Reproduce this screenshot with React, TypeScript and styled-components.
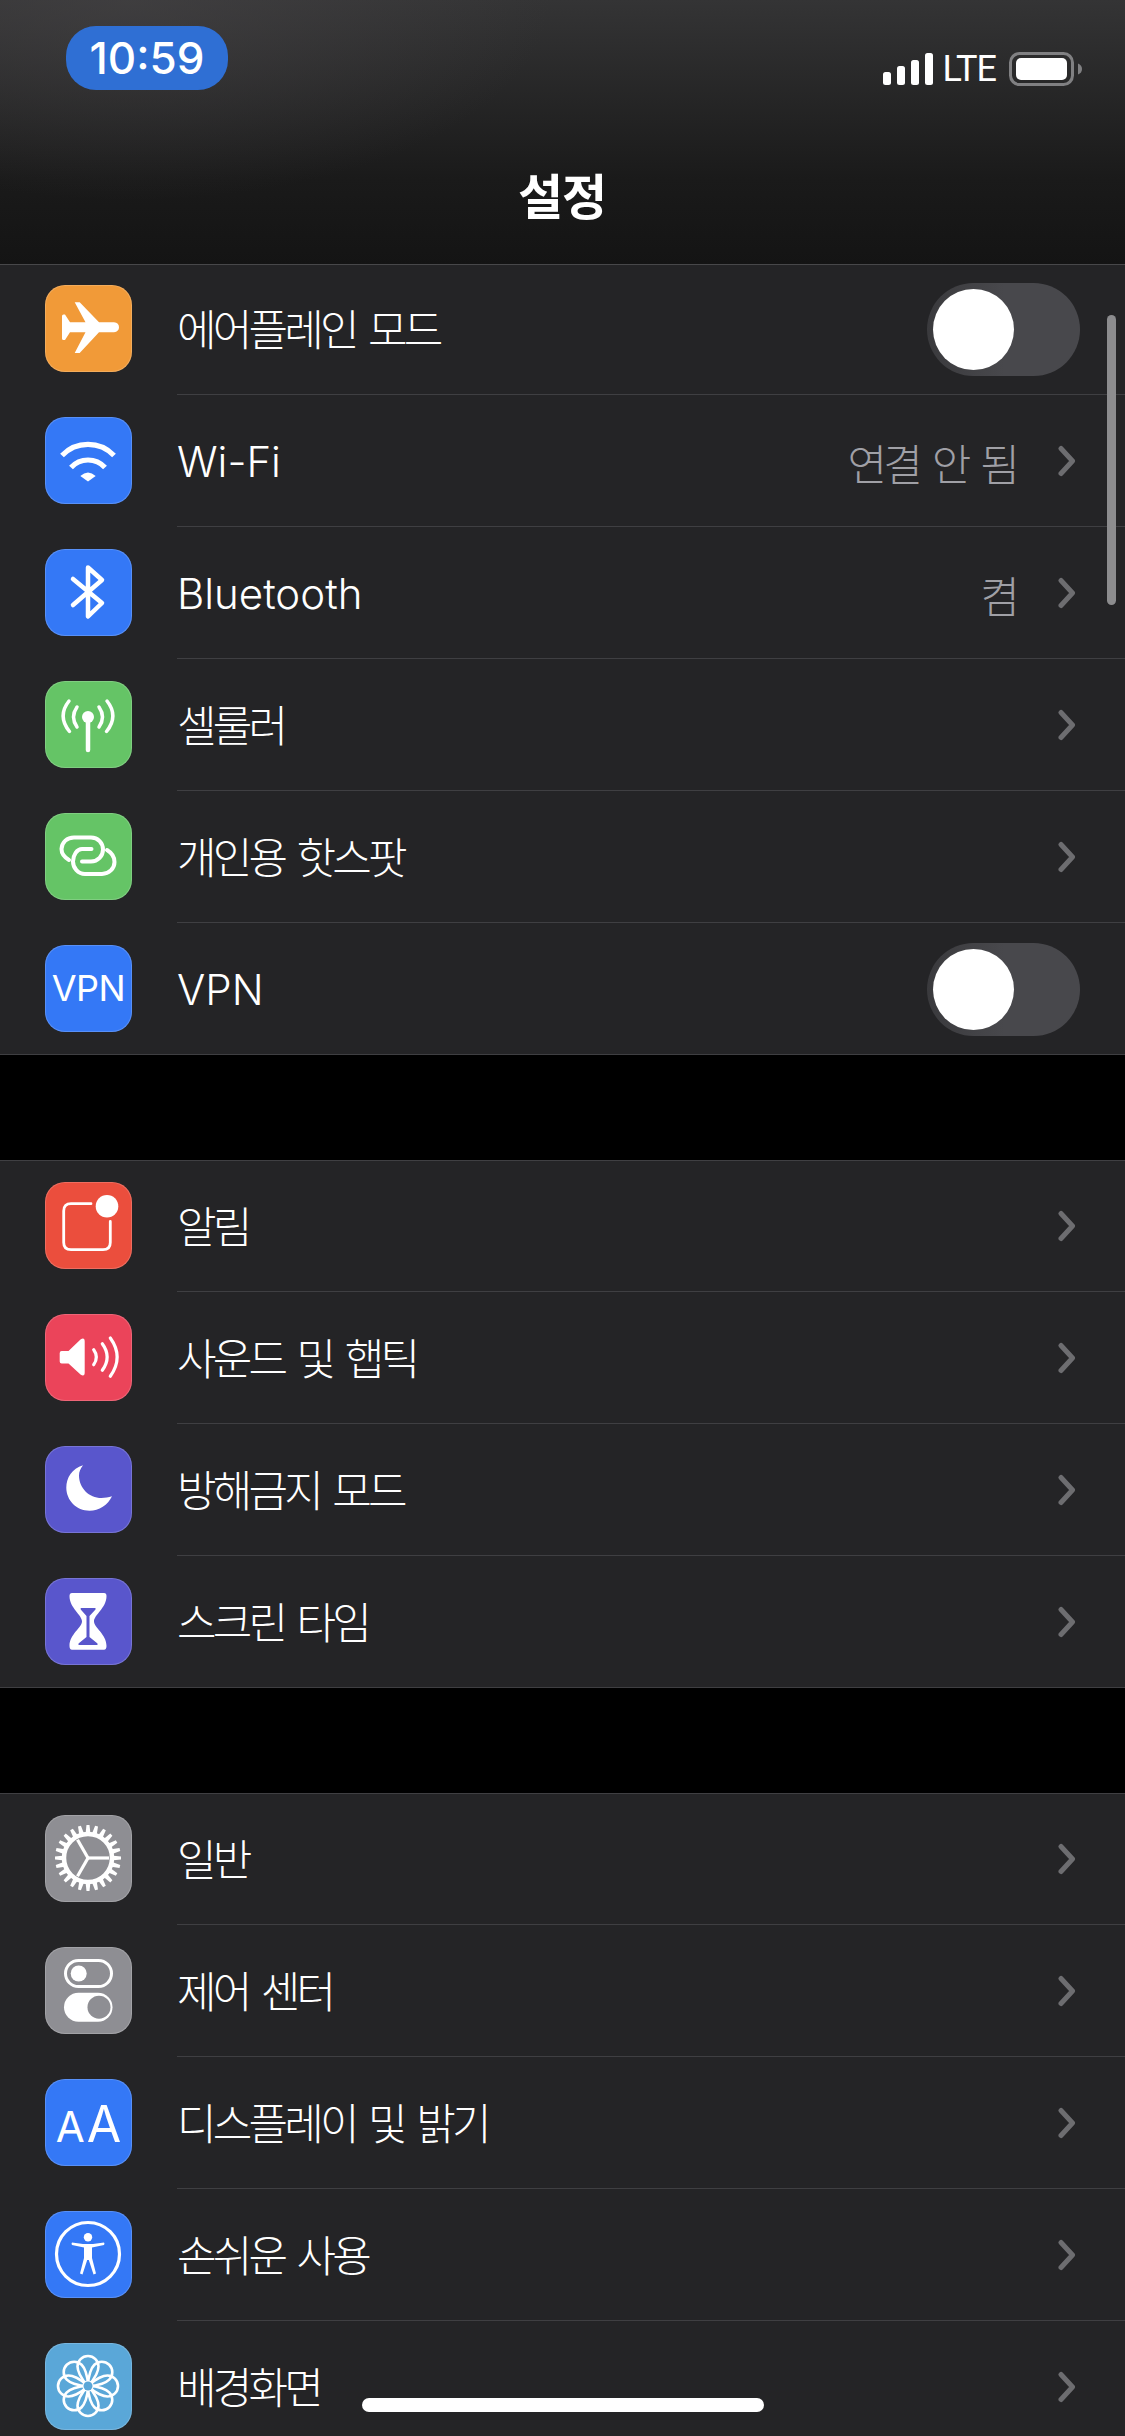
import React from 'react'
import styled, { createGlobalStyle } from 'styled-components'

const GlobalStyle = createGlobalStyle`
  html, body {
    margin: 0;
    padding: 0;
    background: #000;
  }
  body {
    font-family: "Inter", "Noto Sans CJK KR", sans-serif;
  }
`

const Screen = styled.div`
  width: 1125px;
  height: 2436px;
  position: relative;
  overflow: hidden;
  background: #000;
`

const Header = styled.header`
  position: relative;
  z-index: 1;
  height: 265px;
  box-sizing: border-box;
  padding: 26px 43px 0 66px;
  background:
    radial-gradient(ellipse 420px 200px at 130px 0, rgba(70, 68, 70, 0.6), rgba(70, 68, 70, 0) 100%),
    linear-gradient(180deg, #343435 0%, #1a1a1a 68%, #141414 100%);
  border-bottom: 1px solid #48484a;
`

const StatusBar = styled.div`
  display: flex;
  justify-content: space-between;
  align-items: flex-start;
`

const TimePill = styled.div`
  width: 162px;
  height: 64px;
  border-radius: 30px;
  background: #2f6fd4;
  color: #fff;
  font-size: 44px;
  font-weight: 500;
  line-height: 64px;
  text-align: center;
  font-family: "Inter", sans-serif;
`

const StatusRight = styled.div`
  display: flex;
  align-items: center;
  margin-top: 26px;
  height: 34px;
`

const Lte = styled.span`
  color: #fff;
  font-size: 36px;
  font-weight: 400;
  letter-spacing: -1px;
  font-family: "Roboto", sans-serif;
  line-height: 34px;
  margin: 0 13px 0 9px;
`

const Title = styled.h1`
  margin: 69px 24px 0 0;
  text-align: center;
  color: #fff;
  font-size: 49px;
  font-weight: 700;
  line-height: 70px;
  letter-spacing: -1px;
  font-family: "Noto Sans CJK KR", sans-serif;
`

const Group = styled.section`
  background: #242426;
  box-shadow: inset 0 1px 0 #3f3f42;
  margin-bottom: 105px;
`

const FirstGroup = styled(Group)`
  margin-top: -2px;
`

const Row = styled.div<{ $last: boolean }>`
  display: flex;
  align-items: center;
  height: 132px;
  box-sizing: border-box;
  padding-left: 45px;
  border-bottom: ${p => (p.$last ? '1px solid #3f3f42' : 'none')};
`

const IconTile = styled.div<{ $bg: string }>`
  flex: none;
  width: 87px;
  height: 87px;
  margin-bottom: 1px;
  border-radius: 20px;
  background: ${p => p.$bg};
  box-shadow: inset 0 0 0 1px rgba(255, 255, 255, 0.18);
  display: flex;
  align-items: center;
  justify-content: center;
  color: #fff;
  svg {
    display: block;
  }
`

const RowBody = styled.div<{ $last: boolean }>`
  flex: 1;
  align-self: stretch;
  margin-left: 45px;
  box-sizing: border-box;
  display: flex;
  align-items: center;
  padding-right: 45px;
  border-bottom: ${p => (p.$last ? 'none' : '1px solid #3f3f42')};
`

const Label = styled.span<{ $latin: boolean }>`
  flex: 1;
  color: #fff;
  margin-top: 2px;
  font-size: ${p => (p.$latin ? 42 : 43)}px;
  font-weight: 300;
  line-height: 60px;
  letter-spacing: ${p => (p.$latin ? 0 : -3.8)}px;
  word-spacing: ${p => (p.$latin ? 0 : 4)}px;
  font-family: "Inter", "Noto Sans CJK KR", sans-serif;
`

const Value = styled.span`
  color: #a0a0a6;
  font-size: 43px;
  font-weight: 300;
  line-height: 60px;
  letter-spacing: -3.8px;
  word-spacing: 7px;
  margin: 2px 40px 0 0;
  font-family: "Noto Sans CJK KR", sans-serif;
`

const Toggle = styled.div`
  width: 153px;
  height: 93px;
  margin-top: 2px;
  box-sizing: border-box;
  padding: 6px;
  border-radius: 47px;
  background: linear-gradient(90deg, #3a3a3d 0%, #48484c 50%);
`

const Knob = styled.div`
  width: 81px;
  height: 81px;
  border-radius: 50%;
  background: #fff;
`

const ChevronIcon = styled.svg`
  flex: none;
  width: 20px;
  height: 32px;
  margin-right: 4px;
`

const VpnText = styled.span`
  font-size: 36px;
  font-weight: 400;
  letter-spacing: -0.5px;
`

const TextIcon = styled.div`
  display: flex;
  align-items: baseline;
  gap: 2px;
  font-family: "Inter", sans-serif;
  font-weight: 400;
  line-height: 1;
  margin-top: 2px;
`

const SmallA = styled.span`
  font-size: 42px;
`

const BigA = styled.span`
  font-size: 50px;
`

const ScrollBar = styled.div`
  position: absolute;
  z-index: 2;
  left: 1107px;
  top: 315px;
  width: 9px;
  height: 290px;
  border-radius: 5px;
  background: #8c8c8e;
`

const HomeIndicator = styled.div`
  position: absolute;
  z-index: 2;
  left: 362px;
  top: 2398px;
  width: 402px;
  height: 14px;
  border-radius: 7px;
  background: #fff;
`

const Chevron = () => (
  <ChevronIcon viewBox="0 0 20 32">
    <path d="M5 3.5 L16.5 16 L5 28.5" fill="none" stroke="#6d6d70" strokeWidth="5" strokeLinecap="round" strokeLinejoin="round" />
  </ChevronIcon>
)

const Svg = ({ children }: { children: React.ReactNode }) => (
  <svg width="87" height="87" viewBox="0 0 87 87" fill="none">
    {children}
  </svg>
)

const Airplane = () => (
  <Svg>
    <path
      d="M17 31 Q17 29.5 18.5 29.5 L20 29.5 L25 37.3 L40.5 37.3 L29.7 17.3 L34.7 17.3 L54 37.3 L69 37.3 Q74 38 74 42.3 Q74 46.5 69 47.3 L54 47.3 L34.7 68 L29.7 68 L40.5 47.3 L25 47.3 L20 55 L18.5 55 Q17 55 17 53.5 Z"
      fill="#fff"
    />
  </Svg>
)

const Wifi = () => (
  <Svg>
    <path d="M17 38.5 A36 36 0 0 1 69 38.5" stroke="#fff" strokeWidth="5.2" />
    <path d="M26 50.5 A23 23 0 0 1 60 50.5" stroke="#fff" strokeWidth="5.2" />
    <path d="M35.3 59 Q43 52 50.7 59 L43 64.5 Z" fill="#fff" />
  </Svg>
)

const Bluetooth = () => (
  <Svg>
    <path d="M28 30 L57 54 L43 67.5 V18.5 L57 31 L28 56" stroke="#fff" strokeWidth="4.5" strokeLinecap="round" strokeLinejoin="round" />
  </Svg>
)

const Cellular = () => (
  <Svg>
    <circle cx="43" cy="36" r="6" fill="#fff" />
    <path d="M43 38 V69" stroke="#fff" strokeWidth="4.5" strokeLinecap="round" />
    <path d="M32 26 Q25 36 32 46" stroke="#fff" strokeWidth="3.5" strokeLinecap="round" />
    <path d="M54 26 Q61 36 54 46" stroke="#fff" strokeWidth="3.5" strokeLinecap="round" />
    <path d="M24 20 Q12 35 24.5 50.5" stroke="#fff" strokeWidth="3.5" strokeLinecap="round" />
    <path d="M62 20 Q74 35 61.5 50.5" stroke="#fff" strokeWidth="3.5" strokeLinecap="round" />
  </Svg>
)

const Hotspot = () => (
  <Svg>
    <path d="M24 47 C19 44 16.5 40 16.5 36 C17 29 22 24.5 29 24.5 H46 C53 24.5 58 30 58 36.5 C58 43 53 48.5 46 48.5 H37" stroke="#fff" strokeWidth="4" strokeLinecap="round" />
    <path d="M46.5 36 H37 C32 36 28 42 28 48.5 C28 55 33 61 40 61 H57 C64 61 69.5 55.5 69.5 49 C69.5 44 67 40 62 37" stroke="#fff" strokeWidth="4" strokeLinecap="round" />
  </Svg>
)

const Bell = () => (
  <Svg>
    <path d="M46 21.7 H26 Q18.7 21.7 18.7 29 V60.5 Q18.7 67.7 26 67.7 H58 Q65.3 67.7 65.3 60.5 V39.5" stroke="#fff" strokeWidth="2.8" strokeLinecap="round" />
    <circle cx="62" cy="24.3" r="11.3" fill="#fff" />
  </Svg>
)

const Sound = () => (
  <Svg>
    <path d="M14.7 39 Q14.7 37 16.7 37 L23.5 37 L35.5 25.5 Q39.7 23 39.7 27.5 V58.5 Q39.7 63 35.5 60.5 L23.5 49.5 L16.7 49.5 Q14.7 49.5 14.7 47.5 Z" fill="#fff" />
    <path d="M48.7 35.7 Q54 43 48.7 50.7" stroke="#fff" strokeWidth="3.2" strokeLinecap="round" />
    <path d="M57.3 29.7 Q67 43 57.3 56.3" stroke="#fff" strokeWidth="3.2" strokeLinecap="round" />
    <path d="M65.3 24 Q79 43 65.3 62.3" stroke="#fff" strokeWidth="3.2" strokeLinecap="round" />
  </Svg>
)

const Moon = () => (
  <Svg>
    <path d="M38 19.3 C27 22.5 21.3 32 21.3 41.5 C21.3 54.5 31.5 64.7 44.5 64.7 C54 64.7 63 59 67 50.3 C63.5 51.5 60 52 56.5 52 C44 52 34 42 34 29.5 C34 26 35.5 22.5 38 19.3 Z" fill="#fff" />
  </Svg>
)

const Hourglass = () => (
  <Svg>
    <path d="M27 15 H59 Q61.5 15 61.5 18 C61.5 30 49 37 49 43.3 C49 50 61.5 56 61.5 68 Q61.5 71.7 59 71.7 H27 Q24.5 71.7 24.5 68 C24.5 56 37 50 37 43.3 C37 37 24.5 30 24.5 18 Q24.5 15 27 15 Z" fill="#fff" />
    <path d="M35.7 30 H50.5 V31.5 L44.5 38 V59 L52.5 65.5 V67 H33.5 V65.5 L41.5 59 V38 L35.7 31.5 Z" fill="#5956cc" />
  </Svg>
)

const Gear = () => (
  <Svg>
    {Array.from({ length: 24 }, (_, i) => (
      <path key={i} d="M40.4 20 L41.5 10 H44.5 L45.6 20 Z" fill="#fff" transform={`rotate(${i * 15} 43 43)`} />
    ))}
    <circle cx="43" cy="43" r="24" stroke="#fff" strokeWidth="4.5" />
    {[90, 210, 330].map(a => (
      <path key={a} d="M43 43 V22" stroke="#fff" strokeWidth="3.2" transform={`rotate(${a} 43 43)`} />
    ))}
  </Svg>
)

const Switches = () => (
  <Svg>
    <rect x="20.5" y="13.5" width="46" height="26" rx="13" stroke="#fff" strokeWidth="3" />
    <circle cx="33.7" cy="26.5" r="8" fill="#fff" />
    <rect x="19" y="45.7" width="48.5" height="29" rx="14.5" fill="#fff" />
    <circle cx="54" cy="60.2" r="11.5" fill="#8e8e93" />
  </Svg>
)

const Accessibility = () => (
  <Svg>
    <circle cx="43" cy="43" r="31.5" stroke="#fff" strokeWidth="3.2" />
    <circle cx="43" cy="26.3" r="4.2" fill="#fff" />
    <path
      d="M27 31.5 L38 33 H48 L59 31.5 Q60 32.5 59 34 L47 36.5 V47 L51 62.5 L48.5 63.5 L43.8 49 H42.2 L37.5 63.5 L35 62.5 L39 47 V36.5 L27 34 Q26 32.5 27 31.5 Z"
      fill="#fff"
    />
  </Svg>
)

const Flower = () => (
  <Svg>
    {[0, 45, 90, 135, 180, 225, 270, 315].map(a => (
      <path
        key={a}
        d="M43 43 C35 35 32.5 27 32.5 23.5 A10.5 10.5 0 0 1 53.5 23.5 C53.5 27 51 35 43 43 Z"
        stroke="#fff"
        strokeWidth="2.6"
        transform={`rotate(${a} 43 43)`}
      />
    ))}
    <circle cx="43" cy="43" r="5.5" fill="#fff" />
    <circle cx="43" cy="43" r="4.5" fill="#5aa7d8" />
  </Svg>
)

type Item = {
  label: string
  bg: string
  icon: React.ReactNode
  value?: string
  toggle?: boolean
}

const groupOne: Item[] = [
  { label: '에어플레인 모드', bg: '#f19a38', icon: <Airplane />, toggle: true },
  { label: 'Wi-Fi', bg: '#3478f6', icon: <Wifi />, value: '연결 안 됨' },
  { label: 'Bluetooth', bg: '#3478f6', icon: <Bluetooth />, value: '켬' },
  { label: '셀룰러', bg: '#65c466', icon: <Cellular /> },
  { label: '개인용 핫스팟', bg: '#65c466', icon: <Hotspot /> },
  { label: 'VPN', bg: '#3478f6', icon: <VpnText>VPN</VpnText>, toggle: true },
]

const groupTwo: Item[] = [
  { label: '알림', bg: '#eb4e3d', icon: <Bell /> },
  { label: '사운드 및 햅틱', bg: '#eb445a', icon: <Sound /> },
  { label: '방해금지 모드', bg: '#5956cc', icon: <Moon /> },
  { label: '스크린 타임', bg: '#5956cc', icon: <Hourglass /> },
]

const groupThree: Item[] = [
  { label: '일반', bg: '#8e8e93', icon: <Gear /> },
  { label: '제어 센터', bg: '#8e8e93', icon: <Switches /> },
  {
    label: '디스플레이 및 밝기',
    bg: '#3478f6',
    icon: (
      <TextIcon>
        <SmallA>A</SmallA>
        <BigA>A</BigA>
      </TextIcon>
    ),
  },
  { label: '손쉬운 사용', bg: '#3478f6', icon: <Accessibility /> },
  { label: '배경화면', bg: '#5aa7d8', icon: <Flower /> },
]

const SettingsRow = ({ item, last }: { item: Item; last: boolean }) => (
  <Row $last={last}>
    <IconTile $bg={item.bg}>{item.icon}</IconTile>
    <RowBody $last={last}>
      <Label $latin={!/[가-힣]/.test(item.label)}>{item.label}</Label>
      {item.value && <Value>{item.value}</Value>}
      {item.toggle ? (
        <Toggle>
          <Knob />
        </Toggle>
      ) : (
        <Chevron />
      )}
    </RowBody>
  </Row>
)

const rows = (items: Item[]) =>
  items.map((item, i) => <SettingsRow key={item.label} item={item} last={i === items.length - 1} />)

export default function App() {
  return (
    <Screen>
      <GlobalStyle />
      <Header>
        <StatusBar>
          <TimePill>10:59</TimePill>
          <StatusRight>
            <svg width="51" height="32" viewBox="0 0 51 32">
              <rect x="0" y="19" width="8" height="13" rx="2.5" fill="#fff" />
              <rect x="14" y="13" width="8" height="19" rx="2.5" fill="#fff" />
              <rect x="28" y="7" width="8" height="25" rx="2.5" fill="#fff" />
              <rect x="42" y="0" width="8" height="32" rx="2.5" fill="#fff" />
            </svg>
            <Lte>LTE</Lte>
            <svg width="73" height="34" viewBox="0 0 73 34">
              <rect x="1.5" y="1.5" width="62" height="31" rx="9" fill="none" stroke="#808082" strokeWidth="3" />
              <rect x="7" y="6" width="51" height="22" rx="5" fill="#fff" />
              <path d="M69 11.5 Q73 13 73 17 Q73 21 69 22.5 Z" fill="#808082" />
            </svg>
          </StatusRight>
        </StatusBar>
        <Title>설정</Title>
      </Header>
      <FirstGroup>{rows(groupOne)}</FirstGroup>
      <Group>{rows(groupTwo)}</Group>
      <Group>{rows(groupThree)}</Group>
      <ScrollBar />
      <HomeIndicator />
    </Screen>
  )
}
